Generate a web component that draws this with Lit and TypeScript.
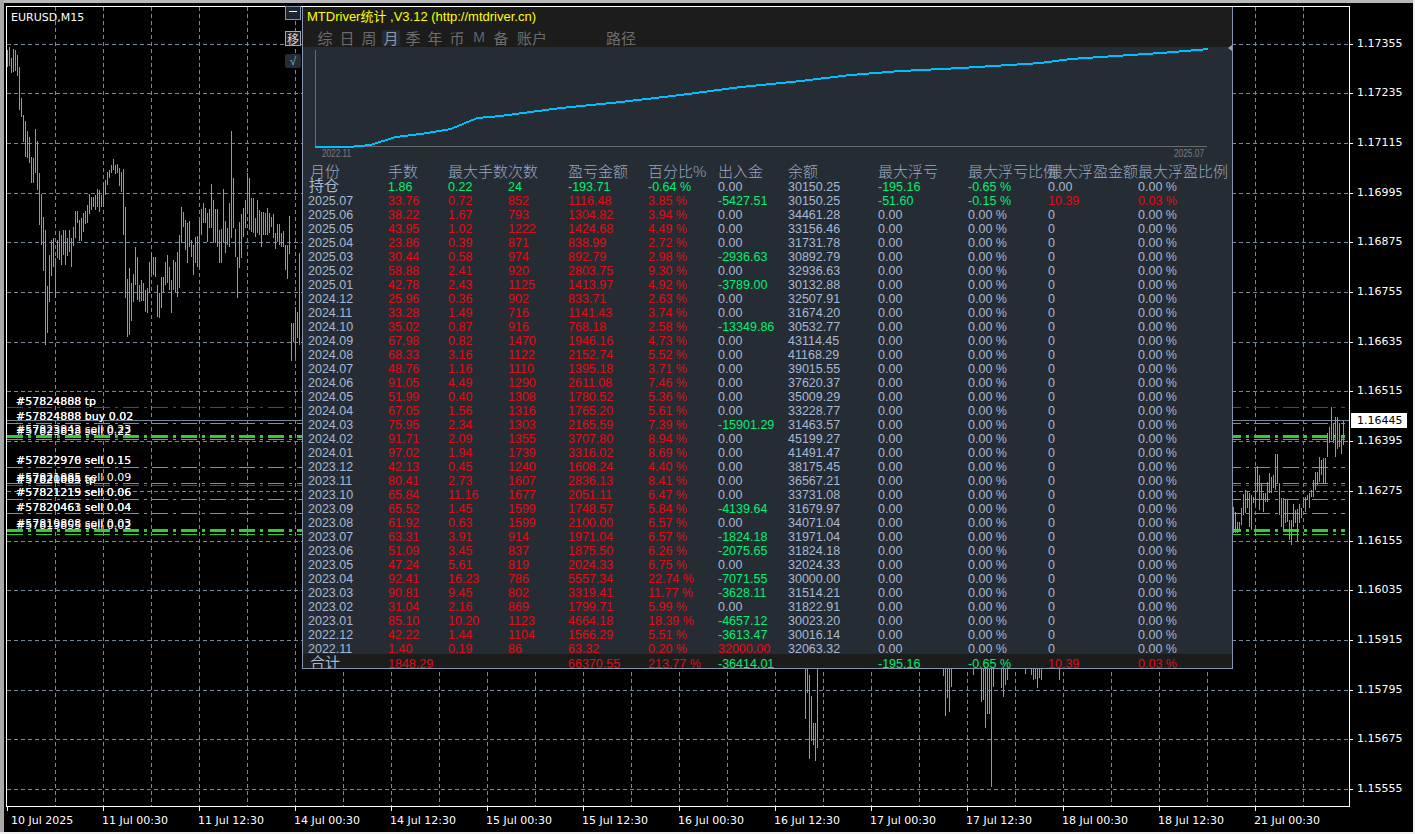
import { LitElement, html, css, svg } from "lit";
import { customElement } from "lit/decorators.js";

const PRICES = ["1.17355","1.17235","1.17115","1.16995","1.16875","1.16755","1.16635","1.16515","1.16395","1.16275","1.16155","1.16035","1.15915","1.15795","1.15675","1.15555"];
const priceY = (i: number) => Math.round(43.5 + i * 49.7);
const TIMES = ["10 Jul 2025","11 Jul 00:30","11 Jul 12:30","14 Jul 00:30","14 Jul 12:30","15 Jul 00:30","15 Jul 12:30","16 Jul 00:30","16 Jul 12:30","17 Jul 00:30","17 Jul 12:30","18 Jul 00:30","18 Jul 12:30","21 Jul 00:30"];

// traced at 3x: [top, bottom] pairs, bars 2px apart starting at x=7
const LEFT = [150,200,142,198,175,220,148,215,150,212,165,228,200,330,295,350,345,425,362,470,392,475,410,488,470,550,475,548,388,520,423,570,520,675,583,735,650,812,690,1035,858,998,765,905,720,828,715,800,775,895,720,775,693,780,705,795,690,765,690,795,715,768,690,755,715,800,680,738,633,715,633,668,660,722,655,722,640,695,633,673,615,670,583,643,590,630,590,620,585,630,568,620,570,635,585,620,550,620,540,585,515,555,510,535,495,520,478,510,495,522,492,520,505,558,515,575,508,705,622,893,838,1010,805,1005,850,962,822,905,742,855,770,900,855,905,840,902,850,902,870,935,865,940,785,880,758,820,770,825,770,832,855,952,880,955,830,925,830,880,785,855,766,850,800,870,840,940,780,870,785,875,757,890,705,865,622,730,635,680,660,750,670,790,662,740,720,770,735,825,712,790,708,800,660,803,628,705,610,668,625,670,638,725,628,685,552,685,600,728,628,730,628,742,690,790,688,788,568,730,662,760,685,735,610,740,393,715,535,685,688,770,770,895,665,805,642,775,625,710,600,685,518,640,535,690,595,695,595,700,655,712,600,700,630,705,635,740,635,705,640,705,625,705,640,700,650,680,642,715,700,748,672,725,672,735,698,740,692,742,735,810,735,838,648,762,968,1082,968,1025,920,1070,935,1015,760,1035];
// traced at 3x from y=380: [top, bottom] pairs, bars 2px apart starting at x=1233
const RIGHT = [380,460,395,458,425,460,425,450,385,435,342,405,330,400,332,385,340,440,345,450,350,370,260,375,258,335,285,390,310,360,340,395,340,365,305,365,280,340,290,340,285,325,222,330,222,310,310,405,355,440,355,450,358,430,360,425,420,480,420,495,372,440,390,430,388,482,372,430,385,415,355,385,350,395,345,360,340,385,330,352,300,352,275,330,275,315,230,305,240,285,235,310,233,313,160,230,140,190,82,180,130,190,112,232,112,208,130,200,175,222,122,195];
const BELOW: number[][] = [[805,669,719],[807,669,693],[809,675,759],[811,696,741],[813,723,745],[815,723,761],[817,669,748],[943,669,676],[945,669,716],[947,669,698],[949,669,712],[951,669,687],[973,669,675],[981,669,702],[983,669,700],[985,669,728],[987,669,714],[989,669,714],[991,669,787],[993,669,687],[1001,669,688],[1003,669,697],[1005,669,685],[1007,669,680],[1025,669,674],[1031,669,675],[1033,669,680],[1035,669,679],[1037,669,688],[1039,669,678],[1041,669,680],[1059,669,680]];

function barsPath(): string {
  let d = "";
  for (let i = 0; i + 1 < LEFT.length; i += 2) d += `M${7.5 + i} ${Math.round(LEFT[i] / 3)}V${Math.round(LEFT[i + 1] / 3)}`;
  for (let i = 0; i + 1 < RIGHT.length; i += 2) d += `M${1233.5 + i} ${Math.round(380 + RIGHT[i] / 3)}V${Math.round(380 + RIGHT[i + 1] / 3)}`;
  for (const [x, t, b] of BELOW) d += `M${x + 0.5} ${t}V${b}`;
  return d;
}

const LABELS: [number, string][] = [
  [402, "#57824888 tp"],[402, "#57824808 tp"],
  [417, "#57824888 buy 0.02"],[417, "#57824808 buy 0.02"],
  [430, "#57823843 sell 0.23"],[432, "#57823838 sell 0.22"],
  [461, "#57822976 sell 0.15"],[461, "#57822970 sell 0.15"],
  [478, "#57821885 sell 0.09"],[480, "#57821885 tp"],[480, "#57820004 tp"],
  [493, "#57821215 sell 0.06"],[493, "#57821219 sell 0.06"],
  [508, "#57820463 sell 0.04"],[508, "#57820461 sell 0.04"],
  [524, "#57819808 sell 0.03"],[526, "#57819855 sell 0.02"],
];

const ROWS = `2025.07|33.76|0.72|852|1116.48|3.85 %|-5427.51|30150.25
2025.06|38.22|1.67|793|1304.82|3.94 %|0.00|34461.28
2025.05|43.95|1.02|1222|1424.68|4.49 %|0.00|33156.46
2025.04|23.86|0.39|871|838.99|2.72 %|0.00|31731.78
2025.03|30.44|0.58|974|892.79|2.98 %|-2936.63|30892.79
2025.02|58.88|2.41|920|2803.75|9.30 %|0.00|32936.63
2025.01|42.78|2.43|1125|1413.97|4.92 %|-3789.00|30132.88
2024.12|25.96|0.36|902|833.71|2.63 %|0.00|32507.91
2024.11|33.28|1.49|716|1141.43|3.74 %|0.00|31674.20
2024.10|35.02|0.87|916|768.18|2.58 %|-13349.86|30532.77
2024.09|67.98|0.82|1470|1946.16|4.73 %|0.00|43114.45
2024.08|68.33|3.16|1122|2152.74|5.52 %|0.00|41168.29
2024.07|48.76|1.16|1110|1395.18|3.71 %|0.00|39015.55
2024.06|91.05|4.49|1290|2611.08|7.46 %|0.00|37620.37
2024.05|51.99|0.40|1308|1780.52|5.36 %|0.00|35009.29
2024.04|67.05|1.56|1316|1765.20|5.61 %|0.00|33228.77
2024.03|75.95|2.34|1303|2165.59|7.39 %|-15901.29|31463.57
2024.02|91.71|2.09|1355|3707.80|8.94 %|0.00|45199.27
2024.01|97.02|1.94|1739|3316.02|8.69 %|0.00|41491.47
2023.12|42.13|0.45|1240|1608.24|4.40 %|0.00|38175.45
2023.11|80.41|2.73|1607|2836.13|8.41 %|0.00|36567.21
2023.10|65.84|11.16|1677|2051.11|6.47 %|0.00|33731.08
2023.09|65.52|1.45|1599|1748.57|5.84 %|-4139.64|31679.97
2023.08|61.92|0.63|1599|2100.00|6.57 %|0.00|34071.04
2023.07|63.31|3.91|914|1971.04|6.57 %|-1824.18|31971.04
2023.06|51.09|3.45|837|1875.50|6.26 %|-2075.65|31824.18
2023.05|47.24|5.61|819|2024.33|6.75 %|0.00|32024.33
2023.04|92.41|16.23|786|5557.34|22.74 %|-7071.55|30000.00
2023.03|90.81|9.45|802|3319.41|11.77 %|-3628.11|31514.21
2023.02|31.04|2.16|869|1799.71|5.99 %|0.00|31822.91
2023.01|85.10|10.20|1123|4664.18|18.39 %|-4657.12|30023.20
2022.12|42.22|1.44|1104|1566.29|5.51 %|-3613.47|30016.14
2022.11|1.40|0.19|86|63.32|0.20 %|32000.00|32063.32`.split("\n").map((r) => r.split("|"));

const HEAD = ["月份","手数","最大手数","次数","盈亏金额","百分比%","出入金","余额","最大浮亏","最大浮亏比例","最大浮盈金额","最大浮盈比例"];
const TABS = ["综","日","周","月","季","年","币","M","备"];

const flowClass = (v: string) => (v.startsWith("-") ? "g" : v === "0.00" ? "" : "r");

const EQUITY: [number, number][] = [[315,147],[348,147],[370,145],[395,137],[420,134],[450,129],[477,118],[500,116],[560,108],[620,102],[680,95],[740,87],[800,81],[850,75],[900,71],[960,68],[1040,63],[1070,59],[1100,57],[1160,53],[1208,49]];

function equityPath(): string {
  let d = "";
  for (let s = 0; s + 1 < EQUITY.length; s++) {
    const [x0, y0] = EQUITY[s];
    const [x1, y1] = EQUITY[s + 1];
    for (let x = x0; x < x1; x++) {
      const y = Math.round(y0 + ((y1 - y0) * (x - x0)) / (x1 - x0));
      d += `M${x - 303} ${y - 48}h1v2h-1z`;
    }
  }
  return d;
}

@customElement("mt-panel")
class MtPanel extends LitElement {
  static styles = css`
    :host { display: flex; flex-direction: column; position: absolute; left: 302px; top: 7px; width: 929px; height: 661px;
      border: 1px solid #8496b0; border-top: none; background: #262c34; overflow: hidden; font-family: "Liberation Sans", "Noto Sans CJK SC", sans-serif; }
    .top { height: 40px; flex: none; background: #1c1c1c; display: flex; flex-direction: column; }
    .title { height: 22px; padding: 0 0 0 4px; color: #ffff00; font-size: 13px; line-height: 20px; white-space: nowrap; }
    .tabs { display: flex; height: 16px; margin-top: 1px; padding-left: 11px; color: #6c6c6c; font: 15px/13px "Noto Sans CJK SC", sans-serif; }
    .tab { width: 18px; margin: 0 2px; text-align: center; white-space: nowrap; }
    .tab > div { margin-top: 1px; height: 15px; overflow: hidden; }
    .tab.wide { width: 40px; margin: 0; }
    .tab.far { margin-left: 49px; }
    .tab.on { background: #262c34; color: #8e98a6; border-radius: 2px; }
    .tab.m { font-family: "Liberation Sans", sans-serif; font-size: 14px; color: #5d6670; }
    .curve { display: block; flex: none; height: 117px; width: 929px; overflow: visible; }
    .curve text { font: 10px "Liberation Sans", sans-serif; fill: #767c85; }
    .row { display: grid; grid-template-columns: 80px 60px 60px 60px 80px 70px 70px 90px 90px 80px 90px 90px; height: 14px; padding-left: 5px; flex: none;
      color: #a6b8d4; font-size: 12.5px; line-height: 16px; white-space: nowrap; }
    .row.head { height: 15px; font: 15px/13px "Noto Sans CJK SC", sans-serif; color: #98a8c2; font-weight: 300; }
    .row.head span:first-child { padding-left: 2px; }
    .row .hold { font: 15px/12px "Noto Sans CJK SC", sans-serif; padding-left: 1px; }
    .row.total { background: #1c1c1c; height: 15px; margin-top: -1px; line-height: 20px; z-index: 1; }
    .row.total span:first-child { font: 15px/15px "Noto Sans CJK SC", sans-serif; color: #a6b8d4; padding-left: 2px; }
    .r { color: #e60a10; }
    .g { color: #00f070; }
    .tri { position: absolute; right: 0; top: 38px; width: 4px; height: 6px; background: #a0a0a0; clip-path: polygon(0 50%, 100% 0, 100% 100%); }
  `;

  render() {
    return html`
      <div class="top">
        <div class="title">MTDriver统计 ,V3.12 (http://mtdriver.cn)</div>
        <div class="tabs">
          ${TABS.map((t) => html`<div class="tab ${t === "月" ? "on" : ""} ${t === "M" ? "m" : ""}"><div>${t}</div></div>`)}
          <div class="tab wide"><div>账户</div></div>
          <div class="tab wide far"><div>路径</div></div>
        </div>
      </div>
      <svg class="curve" viewBox="0 0 929 117" shape-rendering="crispEdges">
        ${svg`
          <path d="M12.5 3V100M12 99.5H904" stroke="#6a6a6a" fill="none"/>
          <path d=${equityPath()} fill="#00bfff"/>
          <text x="19" y="110" textLength="29" lengthAdjust="spacingAndGlyphs">2022.11</text>
          <text x="871" y="110" textLength="30" lengthAdjust="spacingAndGlyphs">2025.07</text>
        `}
      </svg>
      <div class="tri"></div>
      <div class="row head">${HEAD.map((h) => html`<span>${h}</span>`)}</div>
      <div class="row">
        <span class="hold">持仓</span>
        <span class="g">1.86</span><span class="g">0.22</span><span class="g">24</span><span class="g">-193.71</span><span class="g">-0.64 %</span>
        <span>0.00</span><span>30150.25</span><span class="g">-195.16</span><span class="g">-0.65 %</span><span>0.00</span><span>0.00 %</span>
      </div>
      ${ROWS.map((r, i) => html`
        <div class="row">
          <span>${r[0]}</span>
          ${r.slice(1, 6).map((v) => html`<span class="r">${v}</span>`)}
          <span class=${flowClass(r[6])}>${r[6]}</span>
          <span>${r[7]}</span>
          ${i === 0
            ? html`<span class="g">-51.60</span><span class="g">-0.15 %</span><span class="r">10.39</span><span class="r">0.03 %</span>`
            : html`<span>0.00</span><span>0.00 %</span><span>0</span><span>0.00 %</span>`}
        </div>`)}
      <div class="row total">
        <span>合计</span><span class="r">1848.29</span><span></span><span></span><span class="r">66370.55</span><span class="r">213.77 %</span>
        <span class="g">-36414.01</span><span></span><span class="g">-195.16</span><span class="g">-0.65 %</span><span class="r">10.39</span><span class="r">0.03 %</span>
      </div>
    `;
  }
}

@customElement("app-root")
export class AppRoot extends LitElement {
  static styles = css`
    :host { display: block; position: relative; width: 1415px; height: 834px; background: #000; overflow: hidden; font-family: "DejaVu Sans", sans-serif; }
    .canvas { position: absolute; inset: 0; display: block; }
    .t { position: absolute; color: #fff; font-size: 11px; line-height: 14px; white-space: nowrap; }
    .sym { left: 11px; top: 11px; }
    .price { left: 1357px; }
    .time { top: 814px; }
    .cur { position: absolute; left: 1351px; top: 413px; width: 56px; height: 15px; background: #fff; color: #000; font-size: 11px; line-height: 15px; padding-left: 6px; box-sizing: border-box; }
    .lab { left: 16px; }
    .btn { position: absolute; left: 285px; width: 16px; height: 14px; box-sizing: border-box; color: #d8d8d8; text-align: center; font: 12px/13px "Noto Sans CJK SC", sans-serif; }
    .b1 { top: 6px; background: #1c2530; border: 1px solid #8496b0; }
    .b1::after { content: ""; position: absolute; left: 3px; right: 3px; top: 4px; height: 1px; background: #fff; }
    .b2 { top: 31px; height: 15px; background: #1e2228; border: 1px solid #a4a8b0; }
    .b3 { top: 54px; height: 14px; background: #262c34; color: #58b8d8; border-radius: 2px; font: 12px/14px "Liberation Sans", sans-serif; }
  `;

  render() {
    const xs: number[] = [];
    for (let x = 55; x < 1349; x += 48) xs.push(x);
    const gridH = PRICES.map((_, i) => svg`<path d="M7 ${priceY(i) + 0.5}H1349" stroke="#778899" stroke-dasharray="4 3"/>`);
    const gridV = xs.map((x) => svg`<path d="M${x + 0.5} 7V806" stroke="#778899" stroke-dasharray="4 3"/>`);
    const ticksR = PRICES.map((_, i) => svg`<path d="M1349 ${priceY(i) + 0.5}H1353" stroke="#fff"/>`);
    const ticksB = TIMES.map((_, i) => svg`<path d="M${7.5 + i * 96} 806V811" stroke="#fff"/>`);
    const dd = "16 5 3 5";
    return html`
      <svg class="canvas" viewBox="0 0 1415 834" shape-rendering="crispEdges">
        ${svg`
          <rect x="0" y="0" width="1415" height="3" fill="#b8b8b8"/>
          <rect x="0" y="0" width="4" height="834" fill="#a8a8a8"/>
          <rect x="0" y="832" width="1415" height="2" fill="#f0f0f0"/>
          <rect x="1413" y="0" width="2" height="834" fill="#f0f0f0"/>
          ${gridH}${gridV}
          <g fill="none" stroke="#32cd32">
            <path d="M7 423.5H1345" stroke-dasharray="${dd}"/>
            <path d="M7 436H1345" stroke-width="3" stroke-dasharray="${dd}"/>
            <path d="M7 439.5H1345" stroke-dasharray="${dd}"/>
            <path d="M7 467.5H1345" stroke-dasharray="${dd}"/>
            <path d="M7 483.5H1345" stroke-dasharray="${dd}"/>
            <path d="M7 499.5H1345" stroke-dasharray="${dd}"/>
            <path d="M7 513.5H1345" stroke-dasharray="${dd}"/>
            <path d="M7 530H1345" stroke-width="3" stroke-dasharray="${dd}"/>
            <path d="M7 534.5H1345" stroke-dasharray="${dd}"/>
          </g>
          <g fill="none" stroke="#ff0000">
            <path d="M7 407.5H1345" stroke-dasharray="${dd}"/>
            <path d="M7 485.5H1345" stroke-dasharray="${dd}"/>
          </g>
          <path d="M7 420.5H1349" stroke="#778899"/>
          <path d=${barsPath()} fill="none" stroke="#32e032"/>
          <path d="M6.5 6.5H1349.5V806.5H6.5Z" fill="none" stroke="#fff"/>
          ${ticksR}${ticksB}
        `}
      </svg>
      <div class="t sym">EURUSD,M15</div>
      ${PRICES.map((p, i) => html`<div class="t price" style="top:${priceY(i) - 7}px">${p}</div>`)}
      ${TIMES.map((t, i) => html`<div class="t time" style="left:${(i === 0 ? 11 : 6) + i * 96}px">${t}</div>`)}
      <div class="cur">1.16445</div>
      ${LABELS.map(([y, t]) => html`<div class="t lab" style="top:${y - 7}px">${t}</div>`)}
      <div class="btn b1"></div>
      <div class="btn b2">移</div>
      <div class="btn b3">√</div>
      <mt-panel></mt-panel>
    `;
  }
}
